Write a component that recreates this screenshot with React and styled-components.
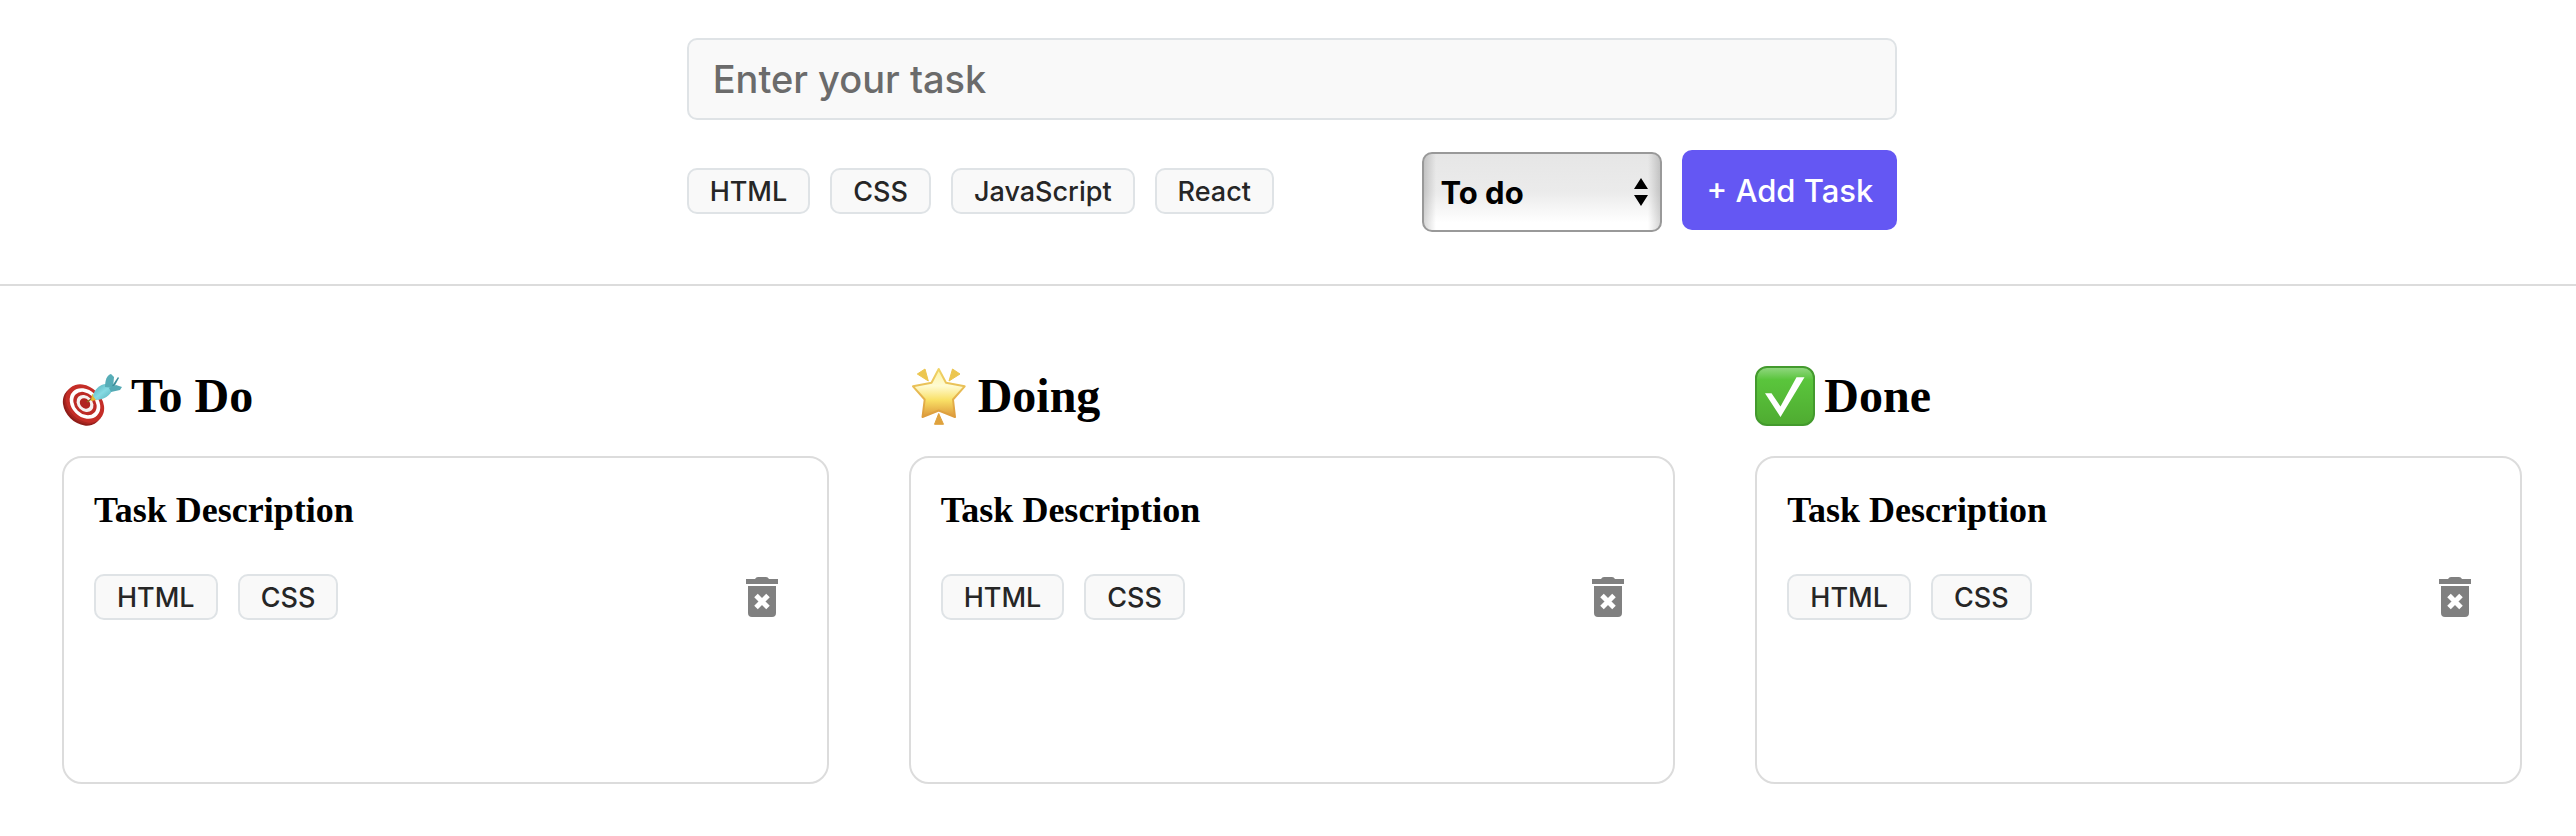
import React from "react";
import styled, { createGlobalStyle } from "styled-components";

const GlobalStyle = createGlobalStyle`
  * { box-sizing: border-box; }
  body {
    margin: 0;
    background: #fff;
    color: #000;
    font-family: "Liberation Serif", "Times New Roman", serif;
  }
`;

const sans = `Inter, "Liberation Sans", sans-serif`;

const Header = styled.header`
  display: flex;
  justify-content: center;
  padding: 38px 0 52px 8px;
  border-bottom: 2px solid #dcdcdc;
`;

const TaskForm = styled.form`
  display: flex;
  flex-direction: column;
  gap: 30px;
  width: 47vw;
  min-width: 1100px;
`;

const TaskInput = styled.input`
  width: 100%;
  height: 82px;
  padding: 0 24px;
  border: 2px solid #dfe3e6;
  border-radius: 10px;
  background: #f9f9f9;
  color: #000;
  font: 500 38px ${sans};
  &::placeholder { color: #6b6b6b; opacity: 1; }
`;

const FormRow = styled.div`
  display: flex;
  align-items: center;
  justify-content: space-between;
`;

const Tags = styled.div`
  display: flex;
  gap: 20px;
`;

const Tag = styled.button`
  height: 46px;
  padding: 2px 21px 0;
  border: 2px solid #dfe3e6;
  border-radius: 10px;
  background: #f9f9f9;
  color: #262626;
  font: 500 27px/40px ${sans};
`;

const Actions = styled.div`
  display: flex;
  align-items: flex-start;
  gap: 20px;
`;

const SelectWrap = styled.div`
  position: relative;
  width: 240px;
  padding-top: 2px;
`;

const StatusSelect = styled.select`
  display: block;
  appearance: none;
  width: 100%;
  height: 80px;
  padding: 0 16px;
  border: 2px solid #999;
  border-radius: 10px;
  background:
    linear-gradient(90deg, rgba(0, 0, 0, 0.16), transparent 12px, transparent calc(100% - 12px), rgba(0, 0, 0, 0.16)),
    linear-gradient(#e6e6e6, #ebebeb 50%, #efefef 58%, #fff 90%);
  color: #000;
  font: 700 31px ${sans};
`;

const Arrows = styled.svg`
  position: absolute;
  top: 28px;
  right: 14px;
  width: 14px;
  height: 28px;
  pointer-events: none;
`;

const AddButton = styled.button`
  height: 80px;
  padding: 0 24px;
  border: 0;
  border-radius: 10px;
  background: #6457f3;
  color: #fff;
  font: 500 31px ${sans};
`;

const Board = styled.main`
  display: grid;
  grid-template-columns: repeat(3, 1fr);
  gap: 80px;
  padding: 80px 54px 52px 62px;
`;

const ColumnTitle = styled.h2`
  display: flex;
  align-items: center;
  gap: 9px;
  height: 60px;
  margin: 0 0 30px;
  font-size: 48px;
  line-height: 60px;
`;

const Emoji = styled.svg`
  width: 60px;
  height: 60px;
`;

const Card = styled.article`
  min-height: 328px;
  padding: 30px;
  border: 2px solid #dcdcdc;
  border-radius: 20px;
`;

const CardTitle = styled.h3`
  margin: 0 0 42px;
  font-size: 36px;
  line-height: 44px;
`;

const CardFooter = styled.div`
  display: flex;
  align-items: center;
  justify-content: space-between;
  padding-right: 19px;
`;

const DeleteButton = styled.button`
  display: flex;
  padding: 0;
  border: 0;
  background: none;
  color: #808080;
`;

const Target = () => (
  <Emoji viewBox="0 0 60 60" aria-hidden="true">
    <defs>
      <linearGradient id="dart" x1="0" y1="0" x2="1" y2="1">
        <stop offset="0" stopColor="#4fa9b4" />
        <stop offset="0.5" stopColor="#86dbe3" />
        <stop offset="1" stopColor="#4fabb6" />
      </linearGradient>
    </defs>
    <ellipse cx="20" cy="40.5" rx="21.5" ry="16.5" transform="rotate(45 20 40.5)" fill="#8f1d19" />
    <ellipse cx="21.5" cy="39" rx="21.5" ry="16.5" transform="rotate(45 21.5 39)" fill="#a82520" />
    <g transform="translate(23 37.5) rotate(45)">
      <ellipse rx="21.5" ry="16.5" fill="#c42d27" />
      <ellipse rx="17" ry="13.4" fill="#fff" />
      <ellipse rx="13" ry="10.2" fill="#bd2b26" />
      <ellipse rx="9.4" ry="7.4" fill="#f6f1f0" />
      <ellipse rx="5.8" ry="4.6" fill="#b02420" />
    </g>
    <path d="M25 36l7-5" stroke="#8f6a1c" strokeWidth="1.5" />
    <path d="M30 28l2 1 3 5-6 1z" fill="#e6b933" />
    <path d="M31 30C32 24 38 18 44 18l7 4C49 30 41 34 34 34z" fill="url(#dart)" />
    <path d="M43 21c0-7 2-12 6-13l3 3-1 11z" fill="#57adb7" />
    <path d="M50 20l6-9 1 1-5 9z" fill="#3d8f9b" />
    <path d="M47 22l7-3 6 2-2 3-9 2z" fill="#55aab5" />
  </Emoji>
);

const Star = () => (
  <Emoji viewBox="0 0 60 60" aria-hidden="true">
    <defs>
      <linearGradient id="star" x1="0" y1="0" x2="0" y2="1">
        <stop offset="0" stopColor="#fdf3a0" />
        <stop offset="0.35" stopColor="#fffbd2" />
        <stop offset="0.65" stopColor="#f9e065" />
        <stop offset="1" stopColor="#dc963a" />
      </linearGradient>
      <linearGradient id="starEdge" x1="0" y1="0" x2="0" y2="1">
        <stop offset="0" stopColor="#f0d466" />
        <stop offset="1" stopColor="#dd9c3c" />
      </linearGradient>
    </defs>
    <path
      d="M29.7 3l7.3 13.8 18.7 3.5L44 33.5 46 51 29.7 44.5 13.5 51l2.2-17.5L4 20.3l18.5-3.5z"
      fill="url(#star)"
      stroke="url(#starEdge)"
      strokeWidth="2"
      strokeLinejoin="round"
    />
    <path d="M8.3 8L16 3l3.3 12zM51 8l-7.5-5L40 15z" fill="#ecc650" stroke="#ecc650" strokeLinejoin="round" />
    <path d="M29.7 47.5l4.8 10.8h-9z" fill="#dfa23c" stroke="#dfa23c" strokeLinejoin="round" />
  </Emoji>
);

const Check = () => (
  <Emoji viewBox="0 0 60 60" aria-hidden="true">
    <defs>
      <linearGradient id="box" x1="0" y1="0" x2="0" y2="1">
        <stop offset="0" stopColor="#93d883" />
        <stop offset="0.22" stopColor="#5ac53c" />
        <stop offset="1" stopColor="#4fab31" />
      </linearGradient>
    </defs>
    <rect x="1" y="1" width="58" height="58" rx="11" fill="url(#box)" stroke="#439a2d" strokeWidth="2" />
    <path d="M10 27.3h6.5l9 13.3 16-29.3h8L25.5 51z" fill="#fff" />
  </Emoji>
);

const Trash = () => (
  <svg width="32" height="40" viewBox="0 0 32 40" aria-hidden="true">
    <path fill="currentColor" d="M9 2q1-2 3-2h8q2 0 3 2h9v5H0V2zM2 9h28v27q0 4-4 4H6q-4 0-4-4z" />
    <path d="M10 18.500l12 12M22 18.500L10 30.500" stroke="#fff" strokeWidth="5" />
  </svg>
);

const columns = [
  { title: "To Do", Icon: Target },
  { title: "Doing", Icon: Star },
  { title: "Done", Icon: Check },
];

export default function App() {
  return (
    <>
      <GlobalStyle />
      <Header>
        <TaskForm onSubmit={(e) => e.preventDefault()}>
          <TaskInput type="text" placeholder="Enter your task" aria-label="Enter your task" />
          <FormRow>
            <Tags>
              {["HTML", "CSS", "JavaScript", "React"].map((t) => (
                <Tag key={t} type="button">{t}</Tag>
              ))}
            </Tags>
            <Actions>
              <SelectWrap>
                <StatusSelect aria-label="Status" defaultValue="todo">
                  <option value="todo">To do</option>
                  <option value="doing">Doing</option>
                  <option value="done">Done</option>
                </StatusSelect>
                <Arrows viewBox="0 0 14 28" aria-hidden="true">
                  <path d="M7 0l7 11H0zM0 17h14L7 28z" />
                </Arrows>
              </SelectWrap>
              <AddButton type="submit">+ Add Task</AddButton>
            </Actions>
          </FormRow>
        </TaskForm>
      </Header>
      <Board>
        {columns.map(({ title, Icon }) => (
          <section key={title}>
            <ColumnTitle><Icon />{title}</ColumnTitle>
            <Card>
              <CardTitle>Task Description</CardTitle>
              <CardFooter>
                <Tags>
                  <Tag type="button">HTML</Tag>
                  <Tag type="button">CSS</Tag>
                </Tags>
                <DeleteButton type="button" aria-label="Delete task"><Trash /></DeleteButton>
              </CardFooter>
            </Card>
          </section>
        ))}
      </Board>
    </>
  );
}
